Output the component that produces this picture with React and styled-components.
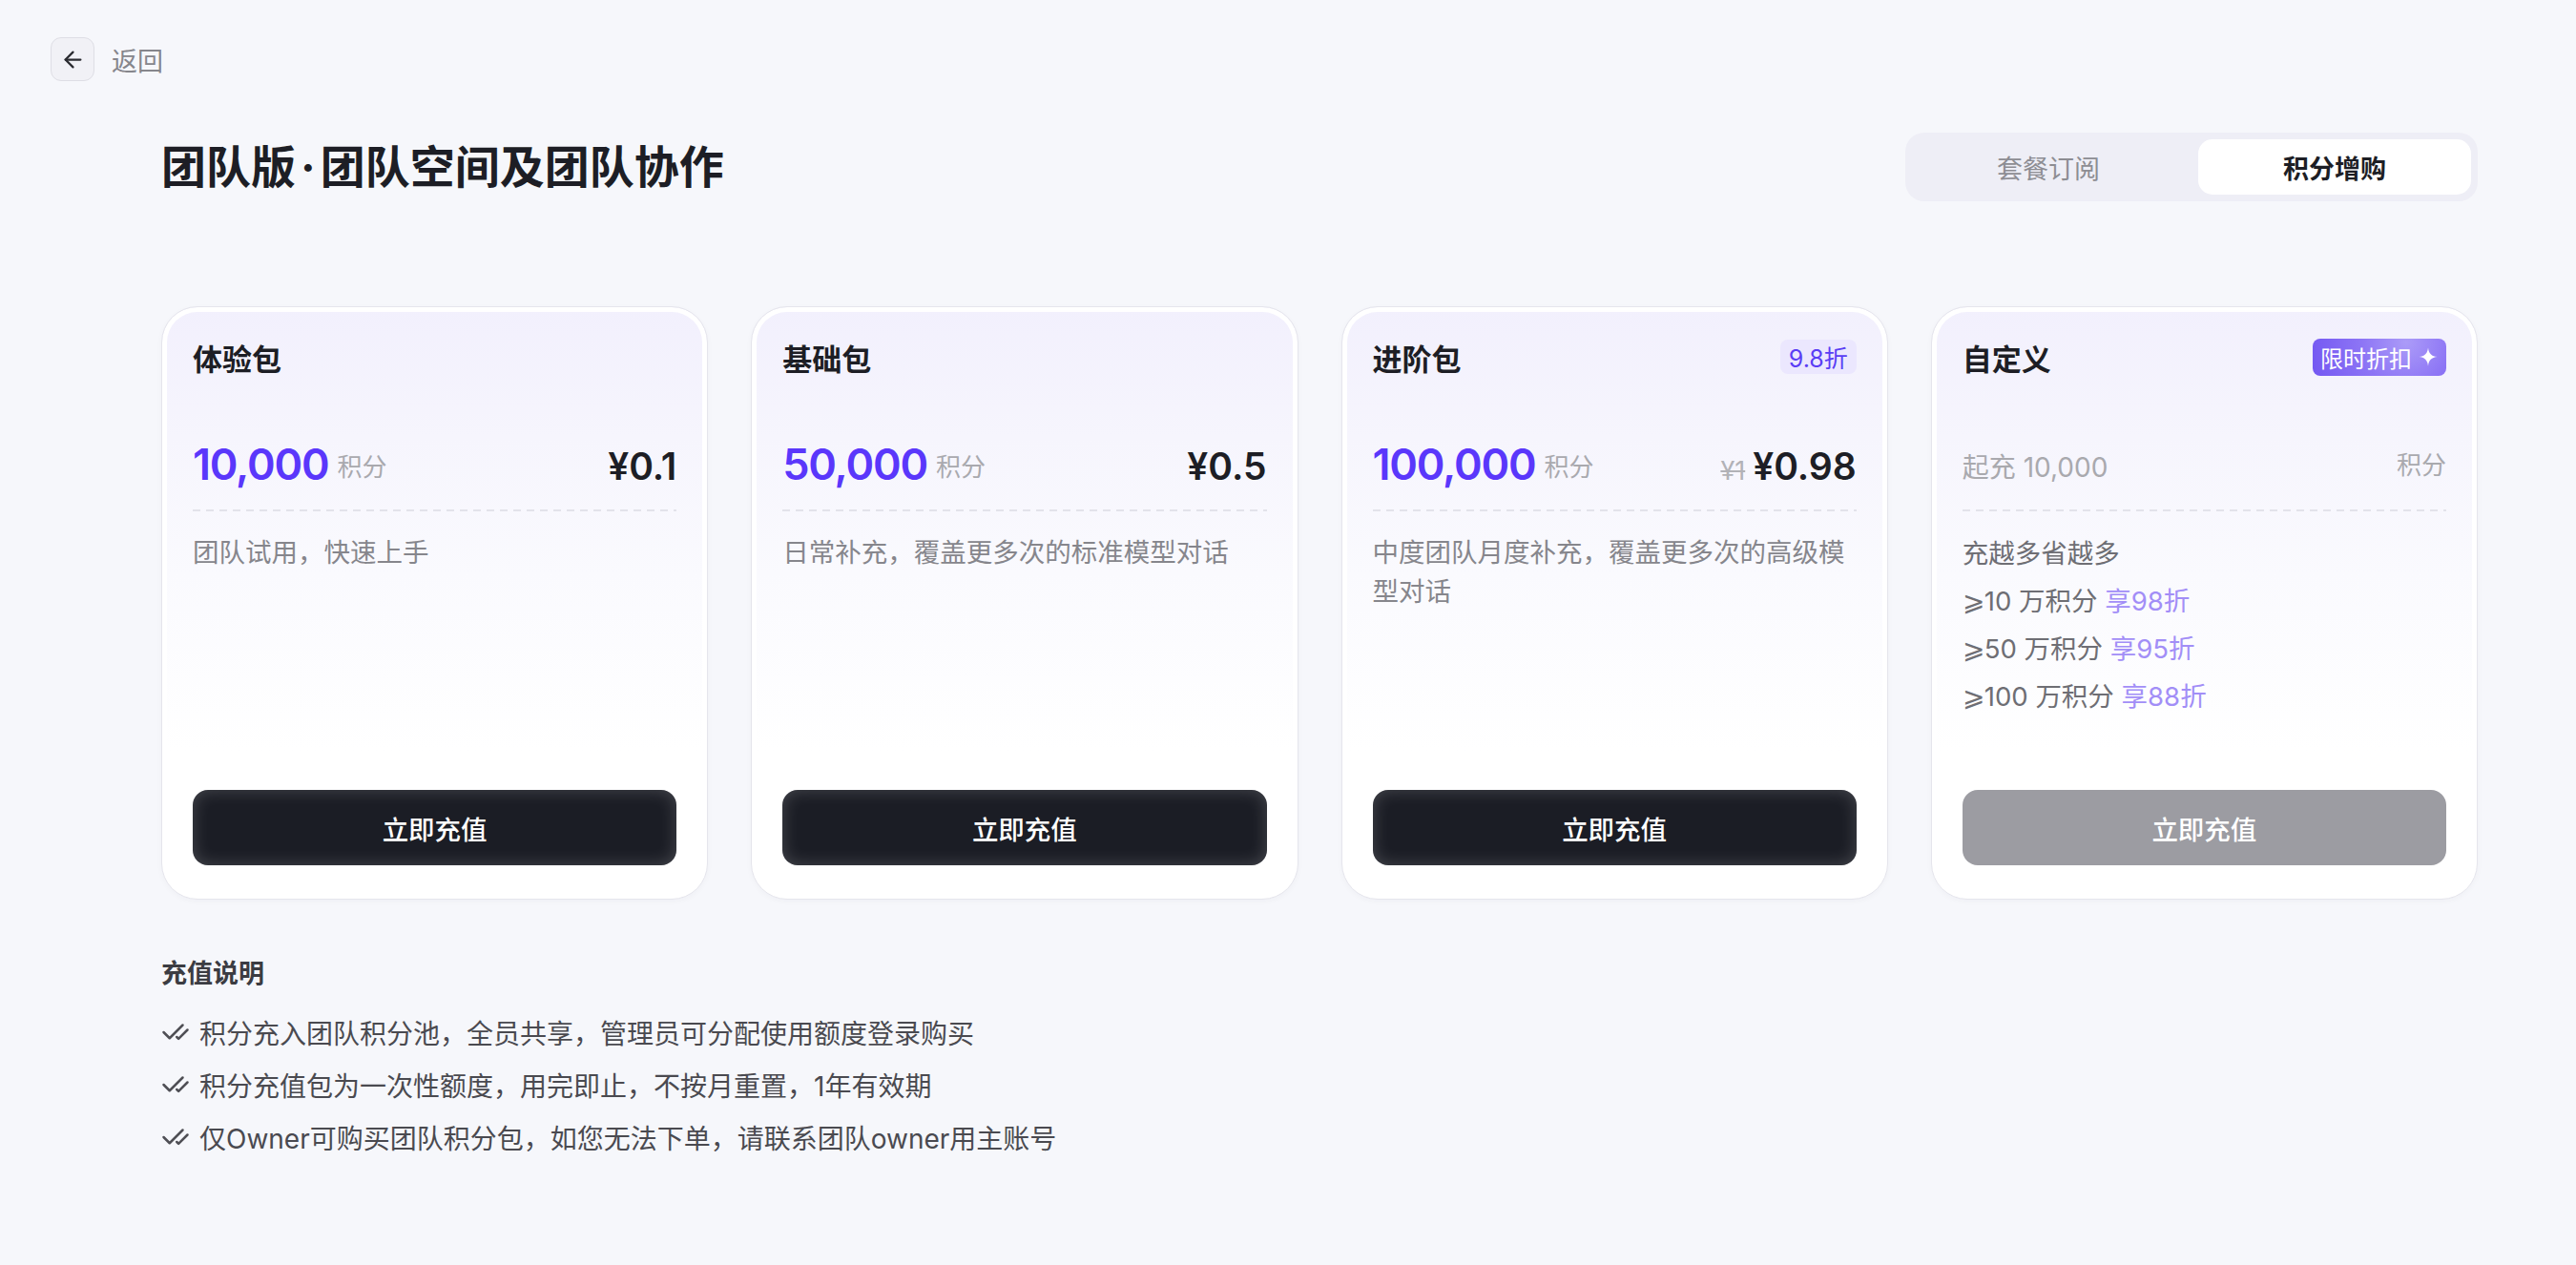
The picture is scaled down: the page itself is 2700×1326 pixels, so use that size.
import React from "react";
import styled, { createGlobalStyle, css } from "styled-components";
import { ArrowLeft, CheckCheck } from "lucide-react";

const GlobalStyle = createGlobalStyle`
  * { box-sizing: border-box; }
  html, body { margin: 0; padding: 0; }
  body {
    background: #f6f7fb;
    font-family: "Inter", "Noto Sans CJK SC", "Noto Sans", sans-serif;
    color: #1d1e25;
    -webkit-font-smoothing: antialiased;
  }
`;

const Page = styled.div`
  min-height: 1326px;
  padding: 39px 103px 60px 53px;
`;

const TopBar = styled.div`
  display: flex;
  align-items: center;
  gap: 18px;
`;

const BackButton = styled.button`
  width: 46px;
  height: 46px;
  display: flex;
  align-items: center;
  justify-content: center;
  border: 1.5px solid #dedee5;
  border-radius: 11px;
  background: #f1f1f6;
  color: #2a2b31;
  padding: 0;
  cursor: pointer;
`;

const BackLabel = styled.span`
  font-size: 27px;
  color: #86868c;
`;

const Content = styled.div`
  margin-left: 116px;
`;

const Header = styled.div`
  margin-top: 54px;
  display: flex;
  align-items: center;
  justify-content: space-between;
`;

const Title = styled.h1`
  margin: 0;
  font-size: 47px;
  line-height: 72px;
  font-weight: 700;
  color: #1d1e25;
`;

const Dot = styled.span`
  margin: 0 5px;
`;

const Tabs = styled.div`
  width: 600px;
  height: 72px;
  padding: 7px;
  display: grid;
  grid-template-columns: 1fr 1fr;
  gap: 14px;
  background: #eeeef6;
  border-radius: 20px;
`;

const Tab = styled.div`
  display: flex;
  align-items: center;
  justify-content: center;
  border-radius: 15px;
  font-size: 27px;
  ${(p) =>
    p.$active
      ? css`
          background: #ffffff;
          color: #1d1e25;
          font-weight: 600;
        `
      : css`
          color: #8d8d93;
          font-weight: 400;
        `}
`;

const Cards = styled.div`
  margin-top: 110px;
  display: grid;
  grid-template-columns: repeat(4, 1fr);
  gap: 45px;
`;

const Card = styled.div`
  min-height: 622px;
  display: flex;
  flex-direction: column;
  padding: 30px 32px 35px;
  border: 1px solid #e5e5ec;
  border-radius: 38px;
  background: linear-gradient(180deg, #f2f0fd 0%, #f6f5fd 22%, #fafafe 45%, #ffffff 75%);
  box-shadow: inset 0 0 0 5px #ffffff, 0 2px 6px rgba(30, 30, 60, 0.03);
`;

const CardHead = styled.div`
  height: 44px;
  display: flex;
  align-items: center;
  justify-content: space-between;
`;

const CardTitle = styled.div`
  font-size: 31px;
  font-weight: 600;
  color: #1d1e25;
`;

const DiscountTag = styled.span`
  height: 36px;
  padding: 0 9px;
  display: inline-flex;
  align-items: center;
  border-radius: 8px;
  background: #ebe7fe;
  color: #5a3df5;
  font-size: 25px;
`;

const PromoTag = styled.span`
  height: 39px;
  padding: 0 8px 0 8px;
  display: inline-flex;
  align-items: center;
  gap: 6px;
  border-radius: 8px;
  color: #ffffff;
  font-size: 24px;
  background: radial-gradient(circle at 70% 10%, #ab9bf8 0%, #8d75f5 45%, #7357f2 100%);
`;

const AmountRow = styled.div`
  margin-top: 61px;
  height: 60px;
  display: flex;
  align-items: baseline;
  justify-content: space-between;
`;

const Amount = styled.div`
  display: flex;
  align-items: baseline;
  gap: 9px;
`;

const Points = styled.span`
  font-size: 45px;
  line-height: 60px;
  font-weight: 600;
  letter-spacing: -1.2px;
  color: #5a37fb;
`;

const Unit = styled.span`
  font-size: 26px;
  color: #a9a9ae;
  transform: translateY(${(p) => (p.$lift ? "-4px" : "0")});
`;

const Placeholder = styled.span`
  font-size: 28px;
  line-height: 60px;
  color: #a9a9ae;
  transform: translateY(3px);
`;

const PriceBox = styled.div`
  display: flex;
  align-items: baseline;
  gap: 8px;
`;

const OldPrice = styled.span`
  font-size: 27px;
  color: #b2b2b7;
  text-decoration: line-through;
`;

const Price = styled.span`
  font-size: 39px;
  font-weight: 600;
  color: #1d1e25;
`;

const Divider = styled.div`
  margin-top: 17px;
  height: 2px;
  background-image: repeating-linear-gradient(90deg, #e3e3ea 0 8px, transparent 8px 14px);
`;

const Desc = styled.p`
  margin: 23px 0 0;
  font-size: 27.5px;
  line-height: 41px;
  color: #86868c;
`;

const TierList = styled.div`
  margin-top: 19px;
  font-size: 27.5px;
  line-height: 50px;
  color: #6e6e74;
`;

const Hi = styled.span`
  color: #a28ef7;
`;

const ChargeButton = styled.button`
  margin-top: auto;
  height: 79px;
  width: 100%;
  border: none;
  border-radius: 16px;
  font-family: inherit;
  font-size: 27.5px;
  font-weight: 500;
  color: #ffffff;
  cursor: pointer;
  ${(p) =>
    p.$disabled
      ? css`
          background: #9c9ca2;
        `
      : css`
          background: #1b1d25;
          box-shadow: inset 0 0 18px rgba(255, 255, 255, 0.2);
        `}
`;

const Notes = styled.div`
  margin-top: 58px;
`;

const NotesTitle = styled.div`
  font-size: 27px;
  line-height: 40px;
  font-weight: 600;
  color: #3b3c42;
`;

const NoteList = styled.div`
  margin-top: 13px;
`;

const Note = styled.div`
  display: flex;
  align-items: center;
  gap: 10px;
  height: 55px;
  font-size: 28px;
  color: #4a4a50;
`;

const Sparkle = () => (
  <svg width="22" height="22" viewBox="0 0 24 24" fill="#ffffff">
    <path d="M12 1.5C12.6 8 16 11.4 22.5 12C16 12.6 12.6 16 12 22.5C11.4 16 8 12.6 1.5 12C8 11.4 11.4 8 12 1.5Z" />
  </svg>
);

const packs = [
  { name: "体验包", points: "10,000", price: "¥0.1", desc: "团队试用，快速上手" },
  { name: "基础包", points: "50,000", price: "¥0.5", desc: "日常补充，覆盖更多次的标准模型对话" },
  {
    name: "进阶包",
    points: "100,000",
    price: "¥0.98",
    old: "¥1",
    tag: "9.8折",
    desc: "中度团队月度补充，覆盖更多次的高级模型对话",
  },
];

const tiers = [
  { min: "10", off: "享98折" },
  { min: "50", off: "享95折" },
  { min: "100", off: "享88折" },
];

const notes = [
  "积分充入团队积分池，全员共享，管理员可分配使用额度登录购买",
  "积分充值包为一次性额度，用完即止，不按月重置，1年有效期",
  "仅Owner可购买团队积分包，如您无法下单，请联系团队owner用主账号",
];

export default function App() {
  return (
    <>
      <GlobalStyle />
      <Page>
        <TopBar>
          <BackButton aria-label="返回">
            <ArrowLeft size={27} strokeWidth={2} />
          </BackButton>
          <BackLabel>返回</BackLabel>
        </TopBar>

        <Content>
          <Header>
            <Title>
              团队版<Dot>·</Dot>团队空间及团队协作
            </Title>
            <Tabs>
              <Tab>套餐订阅</Tab>
              <Tab $active>积分增购</Tab>
            </Tabs>
          </Header>

          <Cards>
            {packs.map((p) => (
              <Card key={p.name}>
                <CardHead>
                  <CardTitle>{p.name}</CardTitle>
                  {p.tag && <DiscountTag>{p.tag}</DiscountTag>}
                </CardHead>
                <AmountRow>
                  <Amount>
                    <Points>{p.points}</Points>
                    <Unit $lift>积分</Unit>
                  </Amount>
                  <PriceBox>
                    {p.old && <OldPrice>{p.old}</OldPrice>}
                    <Price>{p.price}</Price>
                  </PriceBox>
                </AmountRow>
                <Divider />
                <Desc>{p.desc}</Desc>
                <ChargeButton>立即充值</ChargeButton>
              </Card>
            ))}

            <Card>
              <CardHead>
                <CardTitle>自定义</CardTitle>
                <PromoTag>
                  限时折扣
                  <Sparkle />
                </PromoTag>
              </CardHead>
              <AmountRow>
                <Placeholder>起充 10,000</Placeholder>
                <Unit>积分</Unit>
              </AmountRow>
              <Divider />
              <TierList>
                <div>充越多省越多</div>
                {tiers.map((t) => (
                  <div key={t.min}>
                    ⩾{t.min} 万积分 <Hi>{t.off}</Hi>
                  </div>
                ))}
              </TierList>
              <ChargeButton $disabled>立即充值</ChargeButton>
            </Card>
          </Cards>

          <Notes>
            <NotesTitle>充值说明</NotesTitle>
            <NoteList>
              {notes.map((n) => (
                <Note key={n}>
                  <CheckCheck size={30} strokeWidth={2} color="#4f4f55" />
                  {n}
                </Note>
              ))}
            </NoteList>
          </Notes>
        </Content>
      </Page>
    </>
  );
}
